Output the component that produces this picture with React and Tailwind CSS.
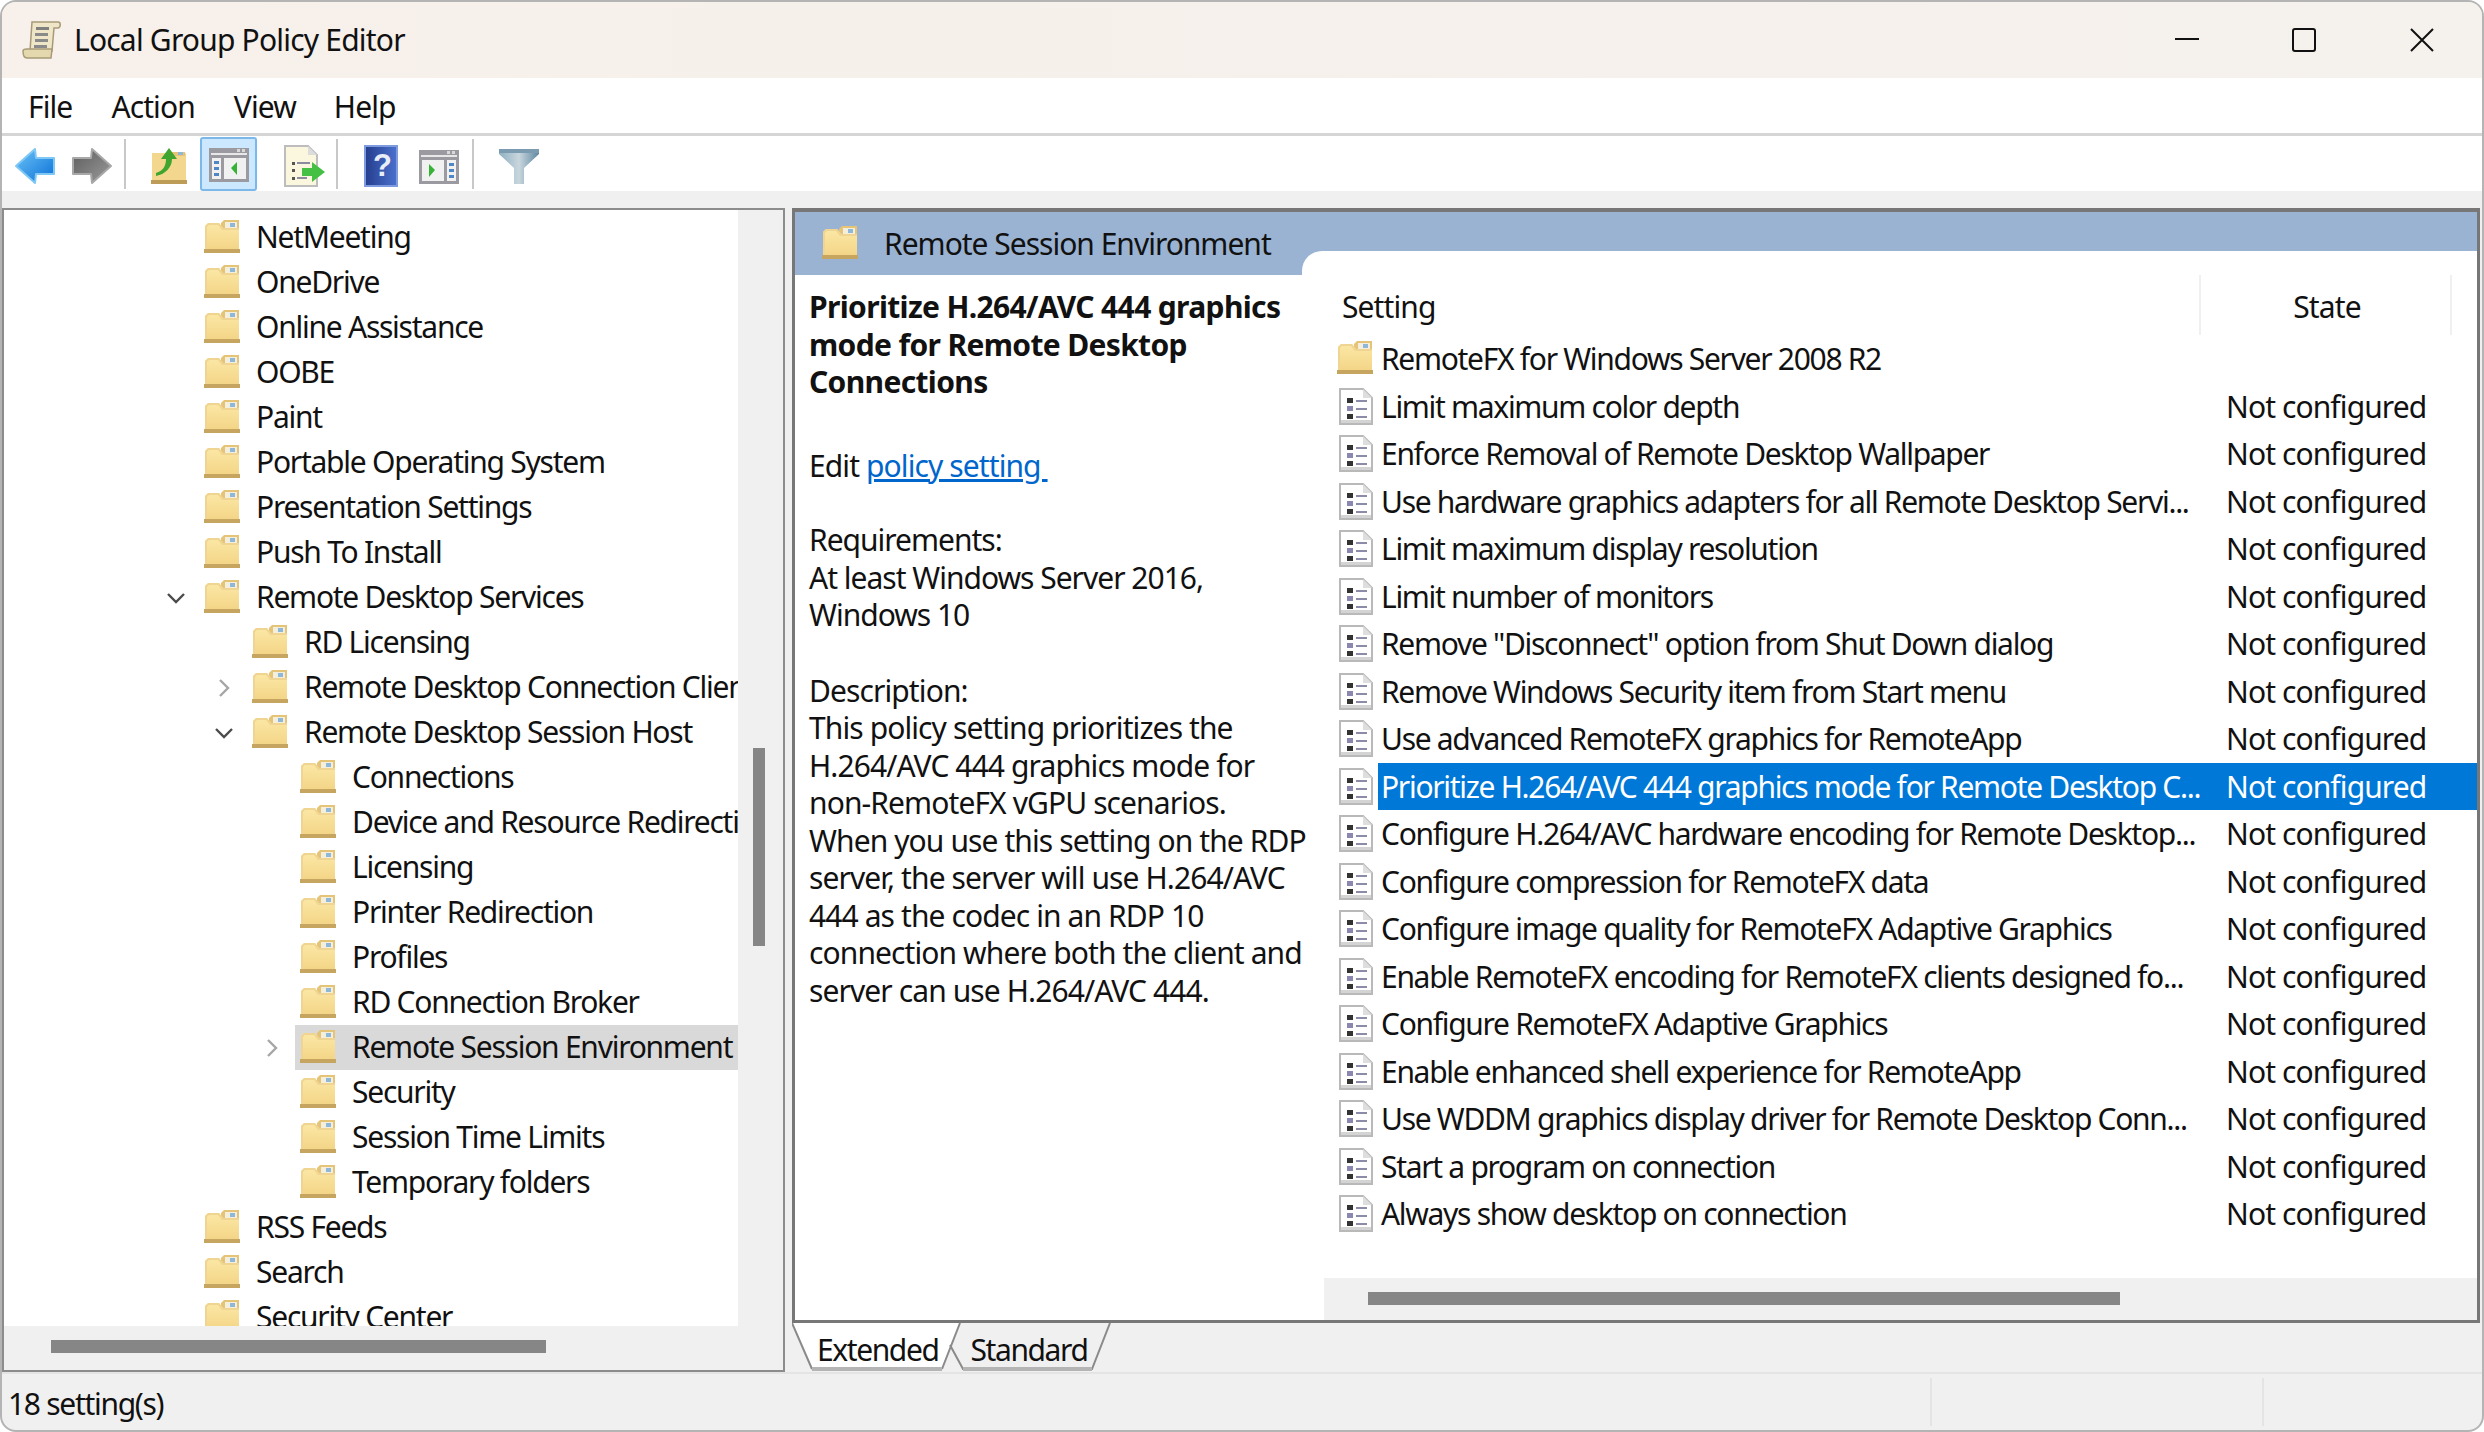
const treeRows = [
  { label: "NetMeeting", level: 1 },
  { label: "OneDrive", level: 1 },
  { label: "Online Assistance", level: 1 },
  { label: "OOBE", level: 1 },
  { label: "Paint", level: 1 },
  { label: "Portable Operating System", level: 1 },
  { label: "Presentation Settings", level: 1 },
  { label: "Push To Install", level: 1 },
  { label: "Remote Desktop Services", level: 1, arrow: "down" },
  { label: "RD Licensing", level: 2 },
  { label: "Remote Desktop Connection Client", level: 2, arrow: "right" },
  { label: "Remote Desktop Session Host", level: 2, arrow: "down" },
  { label: "Connections", level: 3 },
  { label: "Device and Resource Redirection", level: 3 },
  { label: "Licensing", level: 3 },
  { label: "Printer Redirection", level: 3 },
  { label: "Profiles", level: 3 },
  { label: "RD Connection Broker", level: 3 },
  { label: "Remote Session Environment", level: 3, arrow: "right", selected: true },
  { label: "Security", level: 3 },
  { label: "Session Time Limits", level: 3 },
  { label: "Temporary folders", level: 3 },
  { label: "RSS Feeds", level: 1 },
  { label: "Search", level: 1 },
  { label: "Security Center", level: 1 },
];

const settings = [
  "Limit maximum color depth",
  "Enforce Removal of Remote Desktop Wallpaper",
  "Use hardware graphics adapters for all Remote Desktop Servi...",
  "Limit maximum display resolution",
  "Limit number of monitors",
  'Remove "Disconnect" option from Shut Down dialog',
  "Remove Windows Security item from Start menu",
  "Use advanced RemoteFX graphics for RemoteApp",
  "Prioritize H.264/AVC 444 graphics mode for Remote Desktop C...",
  "Configure H.264/AVC hardware encoding for Remote Desktop...",
  "Configure compression for RemoteFX data",
  "Configure image quality for RemoteFX Adaptive Graphics",
  "Enable RemoteFX encoding for RemoteFX clients designed fo...",
  "Configure RemoteFX Adaptive Graphics",
  "Enable enhanced shell experience for RemoteApp",
  "Use WDDM graphics display driver for Remote Desktop Conn...",
  "Start a program on connection",
  "Always show desktop on connection",
];

const levelPad = {
  1: "pl-[152px]",
  2: "pl-[200px]",
  3: "pl-[248px]",
};

function FolderIcon() {
  return (
    <svg width="36" height="33" viewBox="0 0 36 33" className="shrink-0 mb-[3px]">
      <defs>
        <linearGradient id="folderFront" x1="0" y1="0" x2="0" y2="1">
          <stop offset="0" stopColor="#fbe8a6" />
          <stop offset="1" stopColor="#f3d384" />
        </linearGradient>
      </defs>
      <path d="M17 3 L20 0 L35 0 L35 31 L17 31 Z" fill="#e6c477" />
      <rect x="21" y="2" width="12" height="6" fill="#f4efdc" />
      <rect x="26" y="3" width="5" height="4" fill="#8fb8d8" />
      <path d="M1 6 L4 3 L15 3 L19 8 L35 8 L35 32 L1 32 Z" fill="url(#folderFront)" />
      <path d="M1 6 L4 3 L15 3 L19 8 L35 8 L35 10 L18 10 L14 5 L5 5 L3 7 L3 30 L1 30 Z" fill="#f0d592" />
      <rect x="0" y="29" width="36" height="4" fill="#c6a560" />
    </svg>
  );
}

function PolicyIcon() {
  return (
    <svg width="34" height="37" viewBox="0 0 34 37" className="shrink-0">
      <path d="M1 1 L24 1 L33 10 L33 36 L1 36 Z" fill="#fff" stroke="#b9b9b9" strokeWidth="2" />
      <path d="M24 1 L24 10 L33 10 Z" fill="#dedede" />
      <rect x="2" y="32" width="30" height="3" fill="#d4d4d4" />
      <rect x="8" y="10" width="6" height="5" fill="#333" />
      <rect x="8" y="18" width="6" height="5" fill="#8a88b0" />
      <rect x="8" y="26" width="6" height="5" fill="#333" />
      <rect x="17" y="12" width="11" height="2" fill="#8c8ca8" />
      <rect x="17" y="20" width="11" height="2" fill="#8c8ca8" />
      <rect x="17" y="28" width="11" height="2" fill="#8c8ca8" />
    </svg>
  );
}

function BackIcon() {
  return (
    <svg width="42" height="38" viewBox="0 0 42 38">
      <defs>
        <linearGradient id="backFill" x1="0" y1="0" x2="1" y2="1">
          <stop offset="0" stopColor="#6cc4f8" />
          <stop offset="1" stopColor="#0a6fd6" />
        </linearGradient>
      </defs>
      <path d="M2 19 L21 2 L22 11 L40 11 L40 27 L22 27 L21 36 Z" fill="url(#backFill)" stroke="#7fc8f5" strokeWidth="2" strokeLinejoin="round" />
    </svg>
  );
}

function ForwardIcon() {
  return (
    <svg width="42" height="38" viewBox="0 0 42 38">
      <defs>
        <linearGradient id="forwardFill" x1="0" y1="0" x2="1" y2="1">
          <stop offset="0" stopColor="#5c5c5c" />
          <stop offset="1" stopColor="#9c9c9c" />
        </linearGradient>
      </defs>
      <path d="M40 19 L21 2 L20 11 L2 11 L2 27 L20 27 L21 36 Z" fill="url(#forwardFill)" stroke="#a8a8a8" strokeWidth="2" strokeLinejoin="round" />
    </svg>
  );
}

function UpFolderIcon() {
  return (
    <svg width="36" height="37" viewBox="0 0 36 37">
      <rect x="1" y="6" width="34" height="30" fill="#f4d78e" />
      <rect x="0" y="33" width="36" height="4" fill="#bd9c58" />
      <rect x="20" y="5" width="14" height="4" fill="#e6c477" />
      <rect x="27" y="5" width="5" height="3" fill="#8fb8d8" />
      <path d="M5 26 C12 24 15 19 15 12 L10 12 L18 1 L26 12 L21 12 C21 20 15 27 5 29 Z" fill="#3fa52f" />
    </svg>
  );
}

function PanelIcon({ flip }) {
  return (
    <svg width="40" height="34" viewBox="0 0 40 34">
      <rect x="0" y="0" width="40" height="34" fill="#9a9aa0" />
      <rect x="2" y="5" width="36" height="2" fill="#e8e8e8" />
      <rect x="28" y="1" width="3" height="3" fill="#d8d8d8" />
      <rect x="33" y="1" width="3" height="3" fill="#d8d8d8" />
      {flip ? (
        <g>
          <rect x="3" y="10" width="22" height="21" fill="#f1f1f1" />
          <rect x="28" y="10" width="9" height="21" fill="#f1f1f1" />
          <path d="M10 14 L16 20 L10 27 Z" fill="#36b336" />
          <rect x="30" y="13" width="5" height="3" fill="#4f86c8" />
          <rect x="30" y="19" width="5" height="3" fill="#4f86c8" />
          <rect x="30" y="25" width="5" height="3" fill="#4f86c8" />
        </g>
      ) : (
        <g>
          <rect x="3" y="10" width="9" height="21" fill="#f1f1f1" />
          <rect x="15" y="10" width="22" height="21" fill="#f1f1f1" />
          <path d="M28 14 L22 20 L28 27 Z" fill="#36b336" />
          <rect x="5" y="13" width="5" height="3" fill="#4f86c8" />
          <rect x="5" y="19" width="5" height="3" fill="#4f86c8" />
          <rect x="5" y="25" width="5" height="3" fill="#4f86c8" />
        </g>
      )}
    </svg>
  );
}

function ExportIcon() {
  return (
    <svg width="42" height="42" viewBox="0 0 42 42">
      <path d="M1 1 L24 1 L33 10 L33 41 L1 41 Z" fill="#fbf6de" stroke="#bdbdbd" strokeWidth="2" />
      <path d="M24 1 L24 10 L33 10 Z" fill="#dcdcdc" />
      <rect x="8" y="17" width="3" height="3" fill="#555" />
      <rect x="13" y="17" width="13" height="2" fill="#8c8ca0" />
      <rect x="8" y="24" width="3" height="3" fill="#555" />
      <rect x="8" y="32" width="3" height="3" fill="#555" />
      <rect x="13" y="32" width="10" height="2" fill="#8c8ca0" />
      <path d="M18 23 L28 23 L28 17 L41 27 L28 37 L28 31 L18 31 Z" fill="#45c045" />
    </svg>
  );
}

function HelpIcon() {
  return (
    <svg width="34" height="42" viewBox="0 0 34 42">
      <defs>
        <linearGradient id="helpFill" x1="0" y1="0" x2="1" y2="0">
          <stop offset="0" stopColor="#263f90" />
          <stop offset="1" stopColor="#4a70cc" />
        </linearGradient>
      </defs>
      <rect x="0" y="0" width="34" height="42" fill="#7f9be0" />
      <rect x="2" y="2" width="30" height="38" fill="url(#helpFill)" />
      <text x="18" y="31" textAnchor="middle" fontSize="31" fontWeight="700" fill="#e8edf8" fontFamily="Liberation Sans, sans-serif">?</text>
    </svg>
  );
}

function FunnelIcon() {
  return (
    <svg width="40" height="37" viewBox="0 0 40 37">
      <defs>
        <linearGradient id="funnelFill" x1="0" y1="0" x2="1" y2="0">
          <stop offset="0" stopColor="#8fb0c2" />
          <stop offset="0.5" stopColor="#c9d6dd" />
          <stop offset="1" stopColor="#5d87a0" />
        </linearGradient>
      </defs>
      <path d="M0 1 L40 1 L40 6 L25 20 L25 36 L15 36 L15 20 L0 6 Z" fill="url(#funnelFill)" />
      <rect x="0" y="1" width="40" height="4" fill="#7b9bb0" />
    </svg>
  );
}

function Chevron({ arrow }) {
  if (arrow === "down") {
    return (
      <svg width="20" height="12" viewBox="0 0 20 12">
        <path d="M2 2 L10 10 L18 2" fill="none" stroke="#4b4b4b" strokeWidth="2.4" />
      </svg>
    );
  }
  return (
    <svg width="12" height="20" viewBox="0 0 12 20">
      <path d="M2 2 L10 10 L2 18" fill="none" stroke="#a6a6a6" strokeWidth="2.4" />
    </svg>
  );
}

function TreeRow({ row }) {
  return (
    <div className={`h-[45px] flex items-center whitespace-nowrap ${levelPad[row.level]}`}>
      <div className="w-[43px] shrink-0 flex justify-center pr-[3px]">
        {row.arrow && <Chevron arrow={row.arrow} />}
      </div>
      <div className={`flex-1 h-[45px] flex items-center pl-[5px] ${row.selected ? "bg-[#d9d9d9]" : ""}`}>
        <FolderIcon />
        <span className="ml-[16px] pb-[2px] tracking-[-1.25px]">{row.label}</span>
      </div>
    </div>
  );
}

function SettingRow({ text, selected }) {
  return (
    <div className="h-[47.5px] flex items-center pl-[15px]">
      <PolicyIcon />
      <div className={`flex-1 ml-[5px] h-[47px] flex items-center whitespace-nowrap ${selected ? "bg-[#0078d7] text-white" : ""}`}>
        <span className="w-[848px] shrink-0 pl-[3px] tracking-[-1.3px]">{text}</span>
        <span>Not configured</span>
      </div>
    </div>
  );
}

export default function App() {
  return (
    <div className="w-[2484px] h-[1432px] flex flex-col overflow-hidden rounded-[16px] border-2 border-[#b4b4b4] bg-[#f0f0f0] text-[30px] text-[#111] font-['Noto_Sans',sans-serif] tracking-[-0.9px]">
      <div className="h-[76px] shrink-0 flex items-center pl-[20px] bg-gradient-to-r from-[#f7f0eb] to-[#f5f1ec]">
        <svg width="40" height="38" viewBox="0 0 40 38">
          <path d="M10 1 L36 1 C39 1 39 6 36 7 L32 7 L30 30 L8 30 Z" fill="#efe6c8" stroke="#a89a78" strokeWidth="1.5" />
          <rect x="14" y="6" width="13" height="3" fill="#7f7f7f" />
          <rect x="13" y="12" width="13" height="3" fill="#8a8a8a" />
          <rect x="13" y="18" width="13" height="3" fill="#8a8a8a" />
          <rect x="12" y="24" width="13" height="3" fill="#8a8a8a" />
          <path d="M1 30 C1 28 3 28 5 28 L30 28 L29 37 L5 37 C1 37 1 33 1 30 Z" fill="#e3d8ae" stroke="#a89a78" strokeWidth="1.5" />
        </svg>
        <span className="ml-[12px] flex-1 pb-[2px] tracking-[-0.8px]">Local Group Policy Editor</span>
        <svg width="24" height="24" viewBox="0 0 24 24" className="mr-[93px]">
          <rect x="0" y="10" width="24" height="2" fill="#111" />
        </svg>
        <svg width="24" height="24" viewBox="0 0 24 24" className="mr-[94px]">
          <rect x="1" y="1" width="22" height="22" rx="2" fill="none" stroke="#111" strokeWidth="2" />
        </svg>
        <svg width="24" height="24" viewBox="0 0 24 24" className="mr-[48px]">
          <path d="M1 1 L23 23 M23 1 L1 23" fill="none" stroke="#111" strokeWidth="2" />
        </svg>
      </div>

      <div className="h-[55px] shrink-0 flex items-center pl-[26px] pt-[2px] bg-white">
        <span>File</span>
        <span className="ml-[39px]">Action</span>
        <span className="ml-[39px]">View</span>
        <span className="ml-[38px]">Help</span>
      </div>
      <div className="h-[3px] shrink-0 bg-[#d5d5d5]" />

      <div className="h-[55px] shrink-0 flex items-center bg-white pl-[12px]">
        <div className="mt-[4px]"><BackIcon /></div>
        <div className="ml-[15px] mt-[4px]"><ForwardIcon /></div>
        <div className="ml-[11px] w-[2px] h-[50px] bg-[#c8c8c8]" />
        <div className="ml-[25px] mt-[4px]"><UpFolderIcon /></div>
        <div className="ml-[13px] w-[57px] h-[54px] flex items-center justify-center pt-[3px] bg-[#cce8ff] border-2 border-[#7db8ea] rounded-[3px]">
          <PanelIcon />
        </div>
        <div className="ml-[27px] mt-[4px]"><ExportIcon /></div>
        <div className="ml-[10px] w-[2px] h-[50px] bg-[#c8c8c8]" />
        <div className="ml-[26px] mt-[4px]"><HelpIcon /></div>
        <div className="ml-[21px] mt-[6px]"><PanelIcon flip /></div>
        <div className="ml-[13px] w-[2px] h-[50px] bg-[#c8c8c8]" />
        <div className="ml-[25px] mt-[6px]"><FunnelIcon /></div>
      </div>
      <div className="h-[17px] shrink-0 bg-[#f0f0f0]" />

      <div className="flex-1 min-h-0 flex">
        <div className="w-[783px] shrink-0 flex flex-col border-2 border-[#8c8c8c]">
          <div className="flex-1 min-h-0 flex">
            <div className="w-[734px] shrink-0 bg-white overflow-hidden pt-[5px]">
              {treeRows.map((row) => (
                <TreeRow key={row.label} row={row} />
              ))}
            </div>
            <div className="flex-1 pt-[538px] pl-[15px]">
              <div className="w-[12px] h-[198px] bg-[#868686]" />
            </div>
          </div>
          <div className="h-[44px] shrink-0 pt-[14px] pl-[47px]">
            <div className="w-[495px] h-[13px] bg-[#868686]" />
          </div>
        </div>

        <div className="flex-1 min-w-0 flex flex-col ml-[7px] mr-[2px]">
          <div className="flex-1 min-h-0 flex flex-col bg-white border-[3px] border-t-[4px] border-[#777]">
            <div className="h-[63px] shrink-0 flex bg-[#9ab3d2]">
              <div className="w-[507px] shrink-0 flex items-center pl-[27px]">
                <FolderIcon />
                <span className="ml-[26px] whitespace-nowrap tracking-[-1px]">Remote Session Environment</span>
              </div>
              <div className="flex-1 mt-[39px] bg-white rounded-tl-[20px]" />
            </div>

            <div className="flex-1 min-h-0 flex">
              <div className="w-[529px] shrink-0 pl-[14px] pt-[13px] leading-[37.5px] whitespace-nowrap">
                <div className="font-bold tracking-[-0.65px]">
                  Prioritize H.264/AVC 444 graphics<br />
                  mode for Remote Desktop<br />
                  Connections
                </div>
                <div className="mt-[46px]">
                  Edit <span className="text-[#0066cc] underline whitespace-pre">policy setting </span>
                </div>
                <div className="mt-[37px] tracking-[-1px]">
                  Requirements:<br />
                  At least Windows Server 2016,<br />
                  Windows 10
                </div>
                <div className="mt-[38px]">
                  Description:<br />
                  This policy setting prioritizes the<br />
                  H.264/AVC 444 graphics mode for<br />
                  non-RemoteFX vGPU scenarios.<br />
                  When you use this setting on the RDP<br />
                  server, the server will use H.264/AVC<br />
                  444 as the codec in an RDP 10<br />
                  connection where both the client and<br />
                  server can use H.264/AVC 444.
                </div>
              </div>

              <div className="flex-1 min-w-0 flex flex-col">
                <div className="h-[60px] shrink-0 flex items-center">
                  <div className="w-[877px] h-[60px] flex items-center pl-[18px] pt-[2px] border-r-2 border-[#f0f0f0]">Setting</div>
                  <div className="w-[251px] h-[60px] flex items-center justify-center pl-[3px] pt-[2px] border-r-2 border-[#f0f0f0]">State</div>
                </div>
                <div className="flex-1 min-h-0">
                  <div className="h-[47.5px] flex items-center pl-[13px] whitespace-nowrap">
                    <FolderIcon />
                    <span className="ml-[8px] tracking-[-1.3px]">RemoteFX for Windows Server 2008 R2</span>
                  </div>
                  {settings.map((text, i) => (
                    <SettingRow key={text} text={text} selected={i === 8} />
                  ))}
                </div>
                <div className="h-[42px] shrink-0 bg-[#f0f0f0] pt-[14px] pl-[44px]">
                  <div className="w-[752px] h-[13px] bg-[#868686]" />
                </div>
              </div>
            </div>
          </div>

          <div className="h-[49px] shrink-0 relative flex items-center pt-[3px]">
            <svg width="340" height="49" viewBox="0 0 340 49" className="absolute left-0 top-0">
              <path d="M0 0 L20 46 L150 46 L168 0 Z" fill="#fff" />
              <path d="M0 0 L20 46 M150 46 L168 0" fill="none" stroke="#8a8a8a" strokeWidth="2" />
              <path d="M20 46 L150 46" fill="none" stroke="#b4b4b4" strokeWidth="4" />
              <path d="M158 22 L171 46 L300 46 L318 0" fill="none" stroke="#8a8a8a" strokeWidth="2" />
              <path d="M171 46 L300 46" fill="none" stroke="#b4b4b4" strokeWidth="4" />
            </svg>
            <span className="relative ml-[25px] tracking-[-1.4px]">Extended</span>
            <span className="relative ml-[32px] tracking-[-1.4px]">Standard</span>
          </div>
        </div>
      </div>

      <div className="h-[58px] shrink-0 flex items-stretch border-t-2 border-[#e4e4e4]">
        <div className="w-[1928px] flex items-center pl-[6px] pt-[3px] tracking-[-1.3px]">18 setting(s)</div>
        <div className="my-[4px] w-[332px] border-l-2 border-[#e4e4e4]" />
        <div className="my-[4px] flex-1 border-l-2 border-[#e4e4e4]" />
      </div>
    </div>
  );
}
